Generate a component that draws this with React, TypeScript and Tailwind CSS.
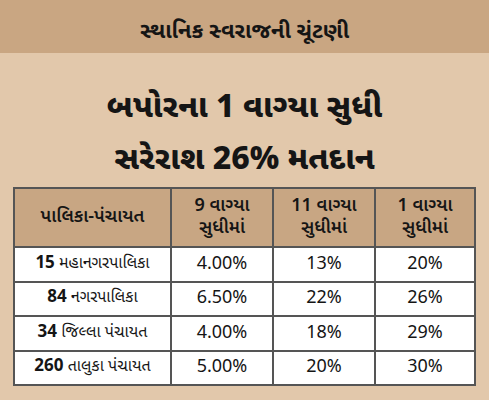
import React from "react";

const rows = [
  { n: "15", name: "મહાનગરપાલિકા", a: "4.00%", b: "13%", c: "20%" },
  { n: "84", name: "નગરપાલિકા", a: "6.50%", b: "22%", c: "26%" },
  { n: "34", name: "જિલ્લા પંચાયત", a: "4.00%", b: "18%", c: "29%" },
  { n: "260", name: "તાલુકા પંચાયત", a: "5.00%", b: "20%", c: "30%" },
];

const App: React.FC = () => {
  return (
    <div
      className="w-[489px] h-[400px] bg-[#e2c8ab] text-[#151515] overflow-hidden"
      style={{ fontFamily: '"Noto Sans Gujarati", "Noto Sans", sans-serif' }}
    >
      <div className="h-[53px] pt-[12px] bg-[#c9a682] flex items-center justify-center text-[22px] font-bold">
        સ્થાનિક સ્વરાજની ચૂંટણી
      </div>

      <div className="flex flex-col items-center pt-[30px] text-[32px] font-extrabold leading-[52px]">
        <div>બપોરના 1 વાગ્યા સુધી</div>
        <div>સરેરાશ 26% મતદાન</div>
      </div>

      <table className="ml-[13px] w-[463px] border-collapse border-2 border-[#555] text-[16px]">
        <thead>
          <tr className="bg-[#c8a683] h-[59px]">
            <th className="w-[157px] border-2 border-[#555] font-semibold text-[18px]">પાલિકા-પંચાયત</th>
            <th className="w-[102px] border-2 border-[#555] font-semibold text-[18px] leading-[22px]">
              9 વાગ્યા
              <br />
              સુધીમાં
            </th>
            <th className="w-[102px] border-2 border-[#555] font-semibold text-[18px] leading-[22px]">
              11 વાગ્યા
              <br />
              સુધીમાં
            </th>
            <th className="border-2 border-[#555] font-semibold text-[18px] leading-[22px]">
              1 વાગ્યા
              <br />
              સુધીમાં
            </th>
          </tr>
        </thead>
        <tbody className="bg-white">
          {rows.map((r) => (
            <tr key={r.n} className="h-[34.5px] text-center">
              <td className="border-2 border-[#555]">
                <span className="font-bold text-[17px]">{r.n}</span> {r.name}
              </td>
              <td className="border-2 border-[#555] text-[18px]">{r.a}</td>
              <td className="border-2 border-[#555] text-[18px]">{r.b}</td>
              <td className="border-2 border-[#555] text-[18px]">{r.c}</td>
            </tr>
          ))}
        </tbody>
      </table>
    </div>
  );
};

export default App;
